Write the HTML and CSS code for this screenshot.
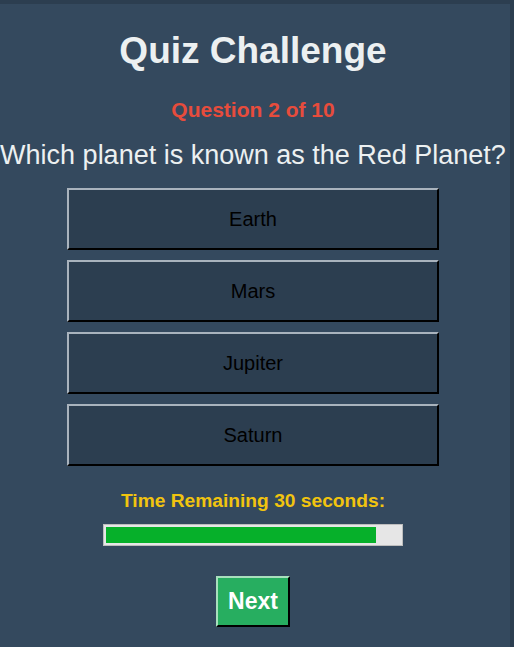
FILE: index.html
```html
<!DOCTYPE html>
<html lang="en">
<head>
<meta charset="utf-8">
<title>Quiz Challenge</title>
<link rel="stylesheet" href="styles.css">
</head>
<body>
<div class="quiz">
  <h1 class="title">Quiz Challenge</h1>
  <div class="counter">Question 2 of 10</div>
  <div class="question">Which planet is known as the Red Planet?</div>
  <div class="options">
    <button class="option">Earth</button>
    <button class="option">Mars</button>
    <button class="option">Jupiter</button>
    <button class="option">Saturn</button>
  </div>
  <div class="timer">Time Remaining 30 seconds:</div>
  <div class="bar"><div class="fill" style="width: 270px"></div></div>
  <button class="next">Next</button>
</div>
</body>
</html>
```
FILE: styles.css
```css
html, body {
  margin: 0;
  padding: 0;
  background: #2c3e50;
}
body {
  font-family: "Liberation Sans", Arial, sans-serif;
  overflow: hidden;
}
.quiz {
  box-sizing: border-box;
  margin-top: 4px;
  width: 510px;
  height: 643px;
  padding: 26px 4px 0 0;
  background: #34495e;
  display: flex;
  flex-direction: column;
  align-items: center;
  text-align: center;
  color: #ecf0f1;
}
.title {
  margin: 0;
  font-size: 37px;
  line-height: 41px;
  font-weight: bold;
  color: #ecf0f1;
}
.counter {
  margin-top: 27px;
  font-size: 21px;
  line-height: 24px;
  font-weight: bold;
  color: #e74c3c;
}
.question {
  margin-top: 18px;
  font-size: 27px;
  line-height: 31px;
  white-space: nowrap;
  color: #ecf0f1;
}
.options {
  margin-top: 17px;
  display: flex;
  flex-direction: column;
  gap: 10px;
}
.option {
  width: 372px;
  height: 62px;
  box-sizing: border-box;
  margin: 0;
  padding: 0;
  background: #2c3e50;
  border: 2px solid;
  border-color: #a9b3bd #000 #000 #a9b3bd;
  font-family: "Liberation Sans", Arial, sans-serif;
  font-size: 20px;
  color: #000;
}
.timer {
  margin-top: 24px;
  font-size: 19.2px;
  line-height: 22px;
  font-weight: bold;
  color: #f1c40f;
}
.bar {
  margin-top: 12px;
  width: 300px;
  height: 22px;
  box-sizing: border-box;
  border: 1px solid #bdbdbd;
  background: #e6e6e6;
  padding: 2px;
}
.fill {
  height: 16px;
  background: #06b02a;
}
.next {
  margin-top: 30px;
  padding: 10px 10px;
  background: #27ae60;
  border: 2px solid;
  border-color: #a8e0bd #000 #000 #a8e0bd;
  font-family: "Liberation Sans", Arial, sans-serif;
  font-size: 23px;
  line-height: 27px;
  font-weight: bold;
  color: #fff;
}
```
